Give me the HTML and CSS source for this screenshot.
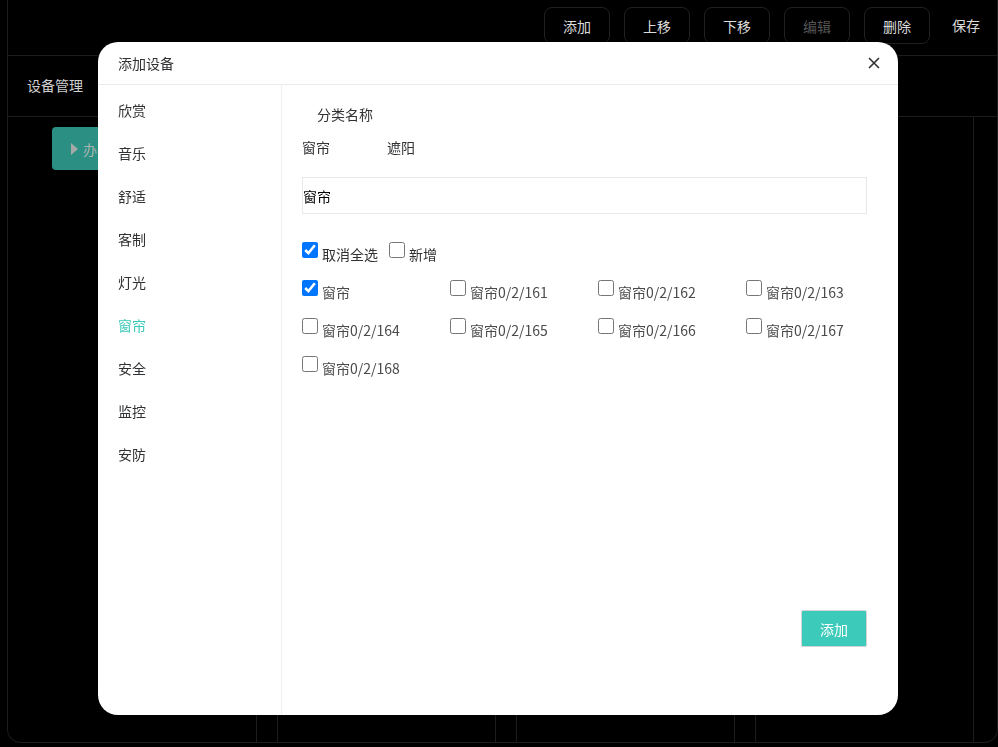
FILE: index.html
```html
<!DOCTYPE html>
<html lang="zh-CN">
<head>
<meta charset="utf-8">
<title>设备管理</title>
<link rel="stylesheet" href="styles.css">
</head>
<body>
<div class="frame">
  <header class="topbar">
    <button class="tb">添加</button>
    <button class="tb">上移</button>
    <button class="tb">下移</button>
    <button class="tb dim">编辑</button>
    <button class="tb">删除</button>
    <span class="save">保存</span>
  </header>
  <div class="tabrow"><span>设备管理</span></div>
  <div class="cols">
    <div class="col first">
      <div class="room-btn"><span class="tri"></span><span class="room-name">办</span></div>
    </div>
    <div class="col"></div>
    <div class="col"></div>
    <div class="col"></div>
  </div>
</div>

<div class="modal">
  <div class="modal-head">
    <span class="modal-title">添加设备</span>
    <svg class="close" width="12" height="12" viewBox="0 0 12 12"><path d="M1 1L11 11M11 1L1 11" stroke="#303133" stroke-width="1.6" fill="none"/></svg>
  </div>
  <div class="modal-body">
    <ul class="side">
      <li>欣赏</li>
      <li>音乐</li>
      <li>舒适</li>
      <li>客制</li>
      <li>灯光</li>
      <li class="active">窗帘</li>
      <li>安全</li>
      <li>监控</li>
      <li>安防</li>
    </ul>
    <div class="content">
      <div class="cat-title">分类名称</div>
      <div class="cats"><span>窗帘</span><span>遮阳</span></div>
      <input class="name-input" type="text" value="窗帘">
      <div class="select-row">
        <label class="chk"><input type="checkbox" checked><span>取消全选</span></label>
        <label class="chk"><input type="checkbox"><span>新增</span></label>
      </div>
      <div class="grid">
        <label class="chk"><input type="checkbox" checked><span>窗帘</span></label>
        <label class="chk"><input type="checkbox"><span>窗帘0/2/161</span></label>
        <label class="chk"><input type="checkbox"><span>窗帘0/2/162</span></label>
        <label class="chk"><input type="checkbox"><span>窗帘0/2/163</span></label>
        <label class="chk"><input type="checkbox"><span>窗帘0/2/164</span></label>
        <label class="chk"><input type="checkbox"><span>窗帘0/2/165</span></label>
        <label class="chk"><input type="checkbox"><span>窗帘0/2/166</span></label>
        <label class="chk"><input type="checkbox"><span>窗帘0/2/167</span></label>
        <label class="chk"><input type="checkbox"><span>窗帘0/2/168</span></label>
      </div>
      <button class="add-btn">添加</button>
    </div>
  </div>
</div>
</body>
</html>
```

FILE: styles.css
```css
* { box-sizing: border-box; }
html, body { margin: 0; padding: 0; }
body {
  background: #000;
  font-family: "Noto Sans CJK SC", sans-serif;
  font-size: 14px;
  width: 998px;
  height: 747px;
  overflow: hidden;
}
.frame {
  margin-left: 7px;
  width: 991px;
  height: 743px;
  display: flex;
  flex-direction: column;
  border-left: 1px solid #1c1c1c;
  border-right: 1px solid #1c1c1c;
  border-bottom: 1px solid #1c1c1c;
  border-radius: 0 0 14px 14px;
}
.topbar {
  height: 56px;
  border-bottom: 1px solid #1c1c1c;
  display: flex;
  justify-content: flex-end;
  align-items: flex-start;
  padding: 7px 17px 0 0;
  gap: 14px;
}
.tb {
  width: 66px;
  height: 37px;
  background: transparent;
  border: 1px solid #202020;
  border-radius: 8px;
  color: #dcdcdc;
  font-family: "Noto Sans CJK SC", sans-serif;
  font-size: 14px;
  padding: 0;
}
.tb:last-of-type { margin-right: 8px; }
.tb.dim { color: #555; }
.save {
  color: #dcdcdc;
  line-height: 37px;
}
.tabrow {
  height: 61px;
  border-bottom: 1px solid #1c1c1c;
  display: flex;
  align-items: center;
  padding: 0 0 2px 19px;
  color: #cfcfcf;
}
.cols {
  flex: 1;
  display: flex;
  gap: 20px;
}
.col {
  width: 219px;
  border-left: 1px solid #1c1c1c;
  border-right: 1px solid #1c1c1c;
}
.col.first {
  width: 249px;
  border-left: none;
  padding: 10px 0 0 44px;
}
.room-btn {
  width: 46px;
  height: 43px;
  background: #2b8f84;
  border-radius: 4px 0 0 4px;
  color: #a9b4b1;
  font-size: 14px;
  display: flex;
  align-items: center;
  padding-left: 19px;
  gap: 5px;
  overflow: hidden;
  white-space: nowrap;
}
.tri {
  flex: none;
  width: 0;
  height: 0;
  border-top: 6px solid transparent;
  border-bottom: 6px solid transparent;
  border-left: 7px solid #a3aaa8;
}

/* modal */
.modal {
  position: fixed;
  left: 98px;
  top: 42px;
  width: 800px;
  height: 673px;
  background: #fff;
  border-radius: 20px;
  display: flex;
  flex-direction: column;
  overflow: hidden;
}
.modal-head {
  height: 43px;
  border-bottom: 1px solid #ebebeb;
  display: flex;
  align-items: center;
  justify-content: space-between;
  padding: 0 18px 1px 20px;
  flex: none;
}
.close { margin-top: 1px; }
.modal-title {
  color: #303133;
  font-size: 14px;
}
.modal-body {
  flex: 1;
  display: flex;
  min-height: 0;
}
.side {
  list-style: none;
  margin: 0;
  padding: 4px 0 0 20px;
  width: 184px;
  border-right: 1px solid #efefef;
  flex: none;
}
.side li {
  height: 43px;
  line-height: 43px;
  color: #303133;
  font-size: 14px;
}
.side li.active { color: #3cc9b9; }
.content {
  flex: 1;
  display: flex;
  flex-direction: column;
  padding: 19px 31px 0 20px;
  color: #303133;
}
.cat-title {
  line-height: 20px;
  margin-left: 15px;
}
.cats {
  margin-top: 13px;
  line-height: 20px;
  display: flex;
  gap: 57px;
}
.name-input {
  margin-top: 20px;
  width: 565px;
  height: 37px;
  border: 1px solid #e8e8e8;
  padding: 0;
  font-family: "Noto Sans CJK SC", sans-serif;
  font-size: 14px;
  color: #000;
  outline: none;
}
.select-row {
  margin-top: 28px;
  height: 38px;
  display: flex;
  gap: 11px;
}
.chk {
  display: flex;
  align-items: flex-start;
  gap: 4px;
  color: #4a4a4a;
}
.select-row .chk { color: #303133; }
.chk input {
  width: 16px;
  height: 16px;
  margin: 0;
  flex: none;
}
.chk span {
  padding-top: 3px;
  line-height: 18px;
  white-space: nowrap;
}
.grid {
  display: grid;
  grid-template-columns: 148px 148px 148px 121px;
  grid-auto-rows: 38px;
}
.add-btn {
  margin-top: auto;
  margin-bottom: 68px;
  align-self: flex-end;
  width: 66px;
  height: 37px;
  background: #3ccbba;
  border: 1px solid #d3d3d3;
  border-radius: 2px;
  color: #fff;
  font-family: "Noto Sans CJK SC", sans-serif;
  font-size: 14px;
  padding: 0;
}
```
